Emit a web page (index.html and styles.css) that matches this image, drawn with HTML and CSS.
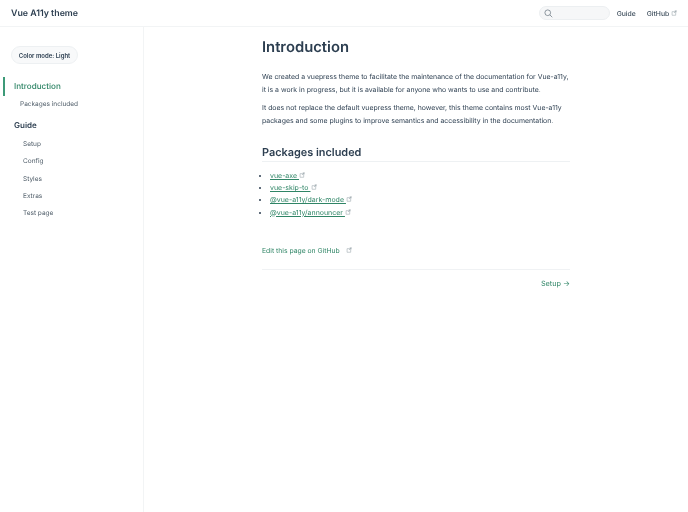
FILE: index.html
```html
<!DOCTYPE html>
<html lang="en">
  <head>
    <meta charset="UTF-8" />
    <title>Vue A11y theme</title>
    <link rel="stylesheet" href="styles.css">
  </head>
  <body>
    <header class="navbar">
      <a class="site-name" href="#">Vue A11y theme</a>
      <div class="nav-right">
        <div class="search">
          <svg class="search-icon" viewBox="0 0 12 12" width="9" height="9">
            <circle cx="5" cy="5" r="3.8" />
            <line x1="7.8" y1="7.8" x2="11" y2="11" />
          </svg>
        </div>
        <a class="nav-link" href="#">Guide</a>
        <a class="nav-link github" href="#">GitHub
          <svg class="ext" viewBox="0 0 100 100" width="6" height="6"><path d="M18 28H78V88H18Z M50 50L88 12M62 12H88V38" /></svg>
        </a>
      </div>
    </header>
    <div class="layout">
      <aside class="sidebar">
        <button class="mode-btn">Color mode: Light</button>
        <a class="side-active" href="#">Introduction</a>
        <a class="side-sub" href="#">Packages included</a>
        <div class="side-title">Guide</div>
        <a class="side-link" href="#">Setup</a>
        <a class="side-link" href="#">Config</a>
        <a class="side-link" href="#">Styles</a>
        <a class="side-link" href="#">Extras</a>
        <a class="side-link" href="#">Test page</a>
      </aside>
      <main class="content">
        <h1>Introduction</h1>
        <p class="first">We created a vuepress theme to facilitate the maintenance of the documentation for Vue-a11y, it is a work in progress, but it is available for anyone who wants to use and contribute.</p>
        <p>It does not replace the default vuepress theme, however, this theme contains most Vue-a11y packages and some plugins to improve semantics and accessibility in the documentation.</p>
        <h2>Packages included</h2>
        <ul>
          <li><a href="#">vue-axe </a><svg class="ext" viewBox="0 0 100 100" width="6" height="6"><path d="M18 28H78V88H18Z M50 50L88 12M62 12H88V38" /></svg></li>
          <li><a href="#">vue-skip-to </a><svg class="ext" viewBox="0 0 100 100" width="6" height="6"><path d="M18 28H78V88H18Z M50 50L88 12M62 12H88V38" /></svg></li>
          <li><a href="#">@vue-a11y/dark-mode </a><svg class="ext" viewBox="0 0 100 100" width="6" height="6"><path d="M18 28H78V88H18Z M50 50L88 12M62 12H88V38" /></svg></li>
          <li><a href="#">@vue-a11y/announcer </a><svg class="ext" viewBox="0 0 100 100" width="6" height="6"><path d="M18 28H78V88H18Z M50 50L88 12M62 12H88V38" /></svg></li>
        </ul>
        <div class="edit">
          <a href="#">Edit this page on GitHub</a>
          <svg class="ext" viewBox="0 0 100 100" width="6" height="6"><path d="M18 28H78V88H18Z M50 50L88 12M62 12H88V38" /></svg>
        </div>
        <div class="page-nav"><a href="#">Setup →</a></div>
      </main>
    </div>
  </body>
</html>
```

FILE: styles.css
```css
body {
  margin: 0;
  font-family: Inter, "Liberation Sans", sans-serif;
  color: #2c3e50;
  background: #fff;
  text-rendering: geometricPrecision;
}
a {
  text-decoration: none;
  color: inherit;
}
.ext {
  fill: none;
  stroke: #8a979f;
  stroke-width: 8;
}
.navbar {
  display: flex;
  align-items: center;
  justify-content: space-between;
  height: 26px;
  padding: 0 11px;
  border-bottom: 1px solid #f2f4f5;
  will-change: transform;
}
.site-name {
  font-size: 8.8px;
  font-weight: 600;
}
.nav-right {
  display: flex;
  align-items: center;
  font-size: 6.8px;
  font-weight: 500;
}
.search {
  display: flex;
  align-items: center;
  box-sizing: border-box;
  width: 71px;
  height: 14px;
  padding-left: 4px;
  background: #f6f7f8;
  border: 1px solid #eceff1;
  border-radius: 7px;
}
.search-icon {
  fill: none;
  stroke: #6d7a84;
  stroke-width: 1;
}
.nav-link {
  margin-left: 7px;
  color: #3c4c5b;
}
.github {
  margin-left: 11px;
}
.layout {
  display: flex;
  min-height: 485px;
  will-change: transform;
}
.sidebar {
  display: flex;
  flex-direction: column;
  box-sizing: border-box;
  width: 144px;
  padding-top: 19px;
  border-right: 1px solid #f2f4f5;
  font-size: 6.5px;
}
.mode-btn {
  align-self: flex-start;
  height: 18px;
  width: 67px;
  padding: 0;
  margin-left: 11px;
  font: 600 6px Inter, "Liberation Sans", sans-serif;
  color: #2c3e50;
  background: #f8f9fa;
  border: 1px solid #edf0f2;
  border-radius: 9px;
}
.side-active {
  margin-top: 13px;
  padding: 0 0 0 9px;
  height: 19px;
  line-height: 19px;
  font-size: 8.1px;
  font-weight: 500;
  color: #2f8566;
  border-left: 2px solid #3d9a78;
  margin-left: 3px;
}
.side-sub {
  margin: 3px 0 0 20px;
  color: #4e5c68;
  line-height: 11px;
}
.side-title {
  margin: 9px 0 0 14px;
  font-size: 8px;
  font-weight: 600;
  line-height: 12px;
}
.side-link {
  margin: 7px 0 0 23px;
  color: #4e5c68;
  line-height: 10.3px;
}
.side-title + .side-link {
  margin-top: 8px;
}
.content {
  box-sizing: border-box;
  width: 308px;
  margin-left: 118px;
  font-size: 6.9px;
  line-height: 13px;
}
h1 {
  margin: 10px 0 0;
  font-size: 14.8px;
  line-height: 20px;
  font-weight: 600;
}
p {
  margin: 5px 0 0;
}
p.first {
  margin-top: 13px;
}
h2 {
  margin: 18px 0 0;
  padding-bottom: 1px;
  font-size: 10.9px;
  line-height: 15px;
  font-weight: 600;
  border-bottom: 1px solid #eef1f3;
}
ul {
  margin: 8px 0 0;
  padding-left: 8px;
}
li {
  line-height: 12.2px;
  font-size: 7px;
}
li a {
  color: #2f8566;
  text-decoration: underline;
}
.edit {
  display: flex;
  align-items: center;
  gap: 6px;
  margin-top: 25px;
  font-size: 6.8px;
  color: #2f8566;
}
.page-nav {
  display: flex;
  justify-content: flex-end;
  margin-top: 12px;
  padding-top: 7px;
  border-top: 1px solid #f0f2f4;
  color: #2f8566;
  font-size: 7.3px;
}
```
